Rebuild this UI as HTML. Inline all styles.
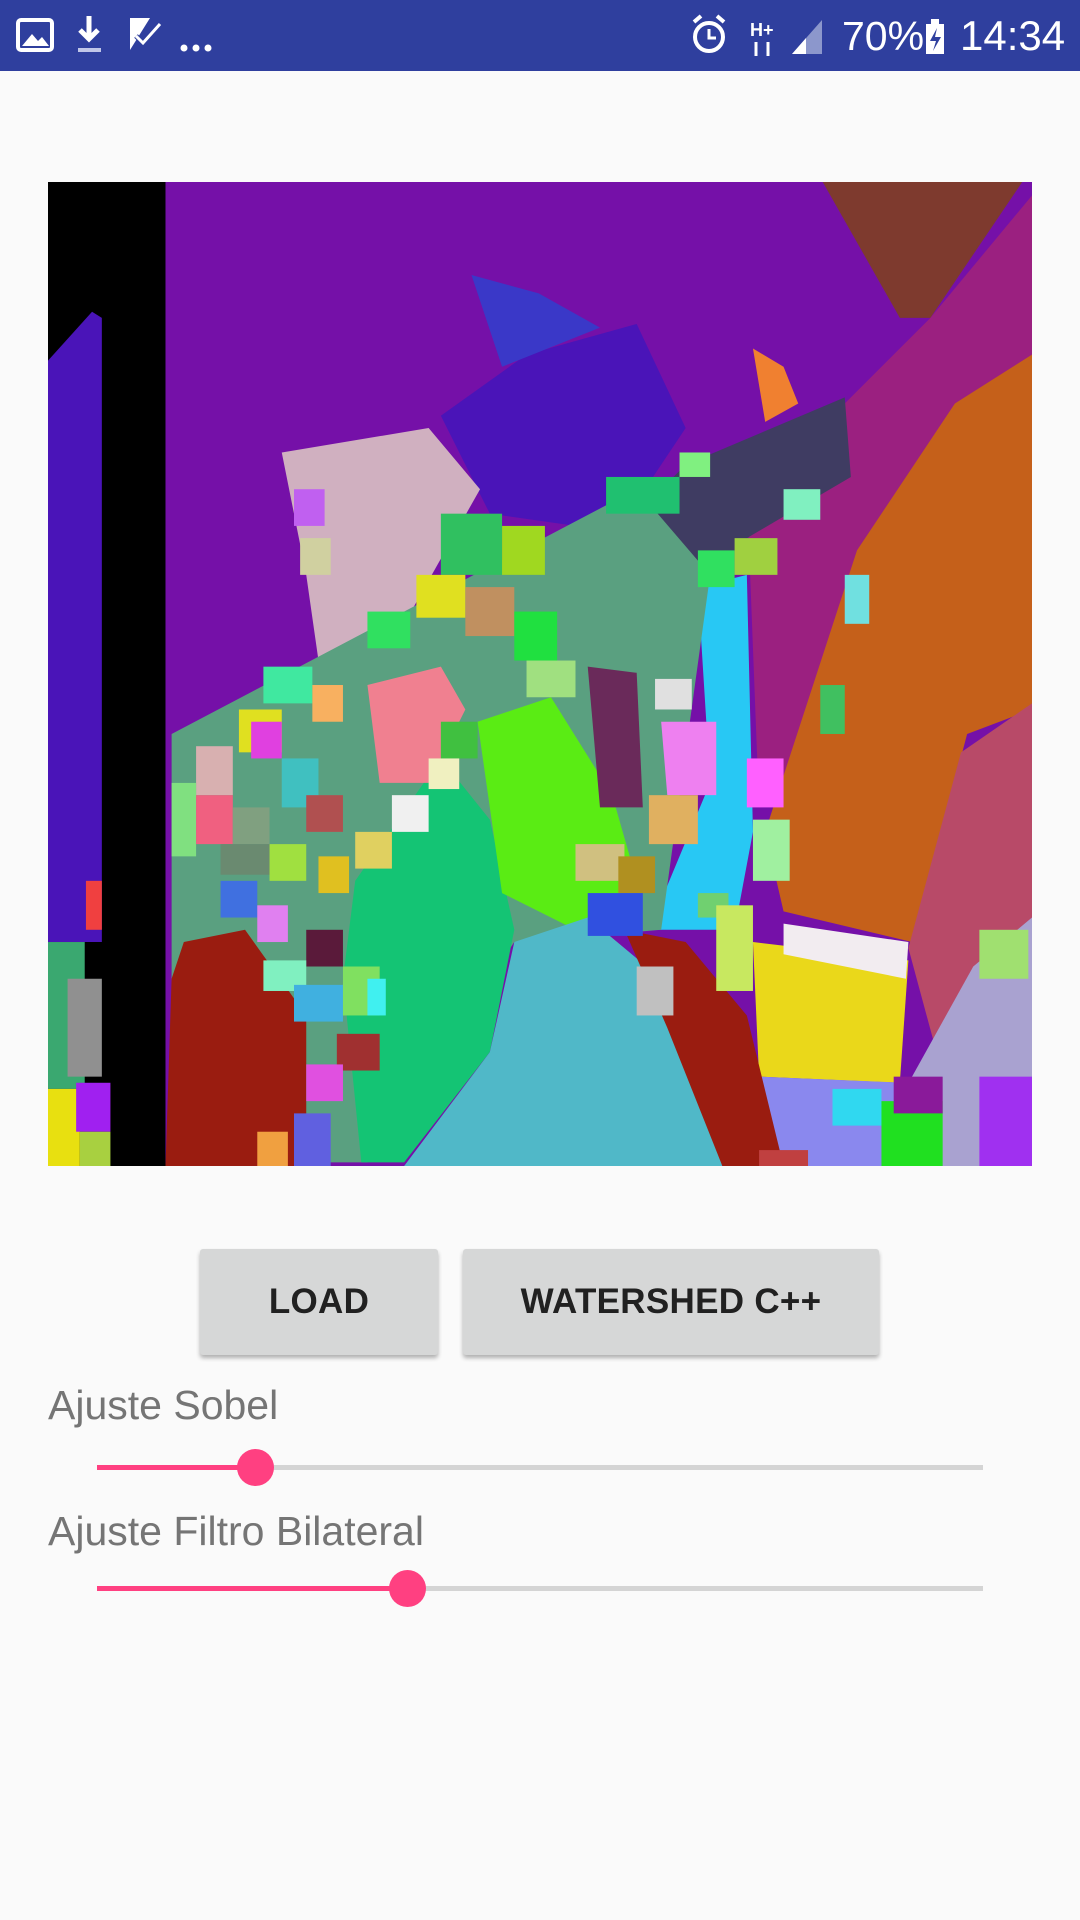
<!DOCTYPE html>
<html><head><meta charset="utf-8"><style>
html,body{margin:0;padding:0;width:1080px;height:1920px;background:#fafafa;overflow:hidden;font-family:"Liberation Sans",sans-serif}
.sb{position:absolute;left:0;top:0;width:1080px;height:71px;background:#2f3f9e;color:#fff}
.btn{position:absolute;background:#d6d7d7;border-radius:3px;box-shadow:0 3px 4px rgba(0,0,0,.3);color:#212121;font-size:35px;font-weight:bold;display:flex;align-items:center;justify-content:center;letter-spacing:.3px}
.lbl{position:absolute;left:48px;color:#757575;font-size:41px}
.track{position:absolute;left:97px;width:886px;height:5px;background:#d4d4d4}
.fill{position:absolute;left:0;top:0;height:5px;background:#ff4081}
.thumb{position:absolute;width:37px;height:37px;border-radius:50%;background:#ff4081;top:-16px}
</style></head><body>
<div class="sb">
<svg width="1080" height="71" style="position:absolute;left:0;top:0">
<rect x="18" y="20" width="34" height="30" rx="3" fill="none" stroke="#fff" stroke-width="4"/>
<path d="M22 46 L32 34 L38 41 L42 37 L49 46Z" fill="#fff"/>
<path d="M89 16 V38 M80 30 L89 39 L98 30" stroke="#fff" stroke-width="5" fill="none"/>
<rect x="78" y="48" width="23" height="4" fill="#c0c6e8"/>
<path d="M130 18 H150 L130 50Z" fill="#fff"/><path d="M136 36 L143 43 L160 24" stroke="#2f3f9e" stroke-width="5" fill="none"/><path d="M136 36 L143 43 L160 24" stroke="#fff" stroke-width="3" fill="none"/>
<circle cx="184" cy="48" r="3.5" fill="#fff"/><circle cx="196" cy="48" r="3.5" fill="#fff"/><circle cx="208" cy="48" r="3.5" fill="#fff"/>
<circle cx="709" cy="37" r="14" fill="none" stroke="#fff" stroke-width="4"/><path d="M709 29 V38 H716" stroke="#fff" stroke-width="3" fill="none"/><path d="M694 22 L701 16 M724 22 L717 16" stroke="#fff" stroke-width="4"/>
<text x="750" y="36" fill="#fff" font-size="18" font-weight="bold">H+</text><path d="M756 42 V56 M768 42 V56" stroke="#fff" stroke-width="3"/>
<path d="M792 54 L822 20 V54Z" fill="#8c97cc"/><path d="M792 54 L806 38 V54Z" fill="#fff"/>
<rect x="926" y="24" width="18" height="30" fill="#fff"/><rect x="931" y="19" width="8" height="5" fill="#fff"/><path d="M937 28 L930 41 H936 L933 51 L941 37 H935Z" fill="#2f3f9e"/>
</svg>
<div style="position:absolute;left:842px;top:13px;font-size:41px">70%</div>
<div style="position:absolute;left:960px;top:12px;font-size:42px">14:34</div>
</div>
<svg style="position:absolute;left:48px;top:182px" width="984" height="984" viewBox="39 149 804 804" preserveAspectRatio="none">
<rect x="39" y="149" width="804" height="804" fill="#7510a8"/>
<rect x="39" y="149" width="96" height="804" fill="#000"/>
<path d="M39 295 L75 255 L83 260 L83 770 L39 770Z" fill="#4a14b8"/>
<path d="M672 149 L835 149 L760 260 L735 260Z" fill="#7e3a2e"/>
<path d="M690 330 L760 260 L843 160 L843 300 L700 650 L620 660 L610 400Z" fill="#9b2080"/>
<path d="M843 290 L843 580 L790 600 L745 770 L640 745 L625 680 L700 450 L780 330Z" fill="#c5601a"/>
<path d="M843 575 L843 750 L765 860 L742 775 L785 615Z" fill="#b84a68"/>
<path d="M843 750 L843 953 L760 953 L745 880 L795 790Z" fill="#a9a2d0"/>
<path d="M615 770 L742 785 L735 885 L620 880Z" fill="#ead81a"/>
<path d="M640 755 L742 770 L740 800 L640 780Z" fill="#f2ecf0"/>
<path d="M620 880 L740 885 L770 953 L625 953Z" fill="#8a88ee"/>
<path d="M450 490 L560 380 L690 325 L695 390 L610 440 L580 470 L560 550 L500 560Z" fill="#3f3c62"/>
<path d="M360 340 L430 290 L520 265 L560 350 L520 410 L470 430 L400 420Z" fill="#4a14b8"/>
<path d="M385 225 L440 240 L490 268 L410 300Z" fill="#3a38c8"/>
<path d="M615 285 L640 300 L652 330 L625 345Z" fill="#f08030"/>
<path d="M230 370 L350 350 L392 400 L330 510 L260 540 L250 470Z" fill="#d0b0c0"/>
<path d="M570 480 L610 470 L615 680 L600 760 L530 760 L580 640Z" fill="#28c8f4"/>
<path d="M140 600 L520 400 L580 470 L540 760 L420 770 L300 950 L140 950Z" fill="#5aa080"/>
<path d="M290 720 L360 620 L400 670 L420 760 L400 860 L330 950 L295 950 L280 800Z" fill="#14c474"/>
<path d="M390 590 L450 570 L500 650 L520 720 L470 760 L410 730Z" fill="#5aec14"/>
<path d="M330 953 L400 860 L420 770 L480 750 L540 800 L590 953Z" fill="#50b8c8"/>
<path d="M150 770 L200 760 L250 830 L250 953 L135 953 L140 800Z" fill="#9a1c10"/>
<path d="M510 760 L560 770 L610 830 L640 953 L590 953 L545 840Z" fill="#9a1c10"/>
<path d="M300 560 L360 545 L380 580 L350 640 L310 640Z" fill="#f08090"/>
<path d="M480 545 L520 550 L525 660 L490 660Z" fill="#6a2a5a"/>
<path d="M540 590 L585 590 L585 650 L545 650Z" fill="#ee80f0"/>
<g>
<rect x="39" y="770" width="30" height="120" fill="#3aa870"/><rect x="55" y="800" width="28" height="80" fill="#909090"/>
<rect x="39" y="890" width="26" height="63" fill="#e8e010"/><rect x="62" y="885" width="28" height="40" fill="#a020f0"/><rect x="65" y="925" width="25" height="28" fill="#a8d040"/>
<rect x="70" y="720" width="13" height="40" fill="#f04040"/>
<rect x="360" y="420" width="50" height="50" fill="#30c060"/><rect x="410" y="430" width="35" height="40" fill="#a0d820"/>
<rect x="340" y="470" width="40" height="35" fill="#e0e020"/><rect x="380" y="480" width="40" height="40" fill="#c09060"/>
<rect x="420" y="500" width="35" height="40" fill="#20e040"/><rect x="300" y="500" width="35" height="30" fill="#30e060"/>
<rect x="215" y="545" width="40" height="30" fill="#40e8a0"/><rect x="255" y="560" width="25" height="30" fill="#f8b060"/>
<rect x="195" y="580" width="35" height="35" fill="#e0e020"/><rect x="205" y="590" width="25" height="30" fill="#e040e0"/>
<rect x="160" y="610" width="30" height="40" fill="#d8b0b0"/><rect x="140" y="640" width="20" height="60" fill="#80e080"/>
<rect x="160" y="650" width="30" height="40" fill="#f06080"/><rect x="190" y="660" width="30" height="30" fill="#80a080"/>
<rect x="230" y="620" width="30" height="40" fill="#40c0c0"/><rect x="250" y="650" width="30" height="30" fill="#b05050"/>
<rect x="220" y="690" width="30" height="30" fill="#a0e040"/><rect x="260" y="700" width="25" height="30" fill="#e0c020"/>
<rect x="180" y="720" width="30" height="30" fill="#4070e0"/><rect x="210" y="740" width="25" height="30" fill="#e080f0"/>
<rect x="250" y="760" width="30" height="30" fill="#5a1a3a"/><rect x="215" y="785" width="35" height="25" fill="#80f0c0"/>
<rect x="240" y="805" width="40" height="30" fill="#40b0e0"/><rect x="275" y="845" width="35" height="30" fill="#a03030"/>
<rect x="250" y="870" width="30" height="30" fill="#e050e0"/><rect x="240" y="910" width="30" height="43" fill="#6060e0"/>
<rect x="210" y="925" width="25" height="28" fill="#f0a040"/><rect x="280" y="790" width="30" height="40" fill="#80e060"/>
<rect x="300" y="800" width="15" height="30" fill="#40f0f0"/><rect x="320" y="650" width="30" height="30" fill="#f0f0f0"/>
<rect x="290" y="680" width="30" height="30" fill="#e0d060"/><rect x="360" y="590" width="30" height="30" fill="#40c040"/>
<rect x="350" y="620" width="25" height="25" fill="#f0f0c0"/><rect x="430" y="540" width="40" height="30" fill="#a0e080"/>
<rect x="470" y="690" width="40" height="30" fill="#d0c080"/><rect x="505" y="700" width="30" height="30" fill="#b09020"/>
<rect x="480" y="730" width="45" height="35" fill="#3050e0"/><rect x="530" y="650" width="40" height="40" fill="#e0b060"/>
<rect x="535" y="555" width="30" height="25" fill="#e0e0e0"/><rect x="570" y="730" width="25" height="20" fill="#70d070"/>
<rect x="585" y="740" width="30" height="70" fill="#c8e860"/><rect x="610" y="620" width="30" height="40" fill="#ff60ff"/>
<rect x="615" y="670" width="30" height="50" fill="#a0f0a0"/><rect x="640" y="400" width="30" height="25" fill="#80f0c0"/>
<rect x="570" y="450" width="30" height="30" fill="#30e060"/><rect x="600" y="440" width="35" height="30" fill="#a0d040"/>
<rect x="495" y="390" width="60" height="30" fill="#20c070"/><rect x="555" y="370" width="25" height="20" fill="#80f080"/>
<rect x="240" y="400" width="25" height="30" fill="#c060f0"/><rect x="245" y="440" width="25" height="30" fill="#d0d0a0"/>
<rect x="520" y="790" width="30" height="40" fill="#c0c0c0"/><rect x="680" y="890" width="40" height="30" fill="#30d8f0"/>
<rect x="720" y="900" width="50" height="53" fill="#20e020"/><rect x="730" y="880" width="40" height="30" fill="#8a1a9a"/>
<rect x="800" y="880" width="43" height="73" fill="#a030f0"/><rect x="690" y="470" width="20" height="40" fill="#70e0e0"/>
<rect x="670" y="560" width="20" height="40" fill="#40c060"/><rect x="800" y="760" width="40" height="40" fill="#a0e070"/>
<rect x="620" y="940" width="40" height="13" fill="#c04040"/><rect x="180" y="690" width="40" height="25" fill="#6a8a70"/>
</g>
</svg>
<div class="btn" style="left:200px;top:1249px;width:238px;height:106px">LOAD</div>
<div class="btn" style="left:463px;top:1249px;width:416px;height:106px">WATERSHED C++</div>
<div class="lbl" style="top:1382px">Ajuste Sobel</div>
<div class="track" style="top:1465px"><div class="fill" style="width:158px"></div><div class="thumb" style="left:140px"></div></div>
<div class="lbl" style="top:1508px">Ajuste Filtro Bilateral</div>
<div class="track" style="top:1586px"><div class="fill" style="width:310px"></div><div class="thumb" style="left:292px"></div></div>
</body></html>
